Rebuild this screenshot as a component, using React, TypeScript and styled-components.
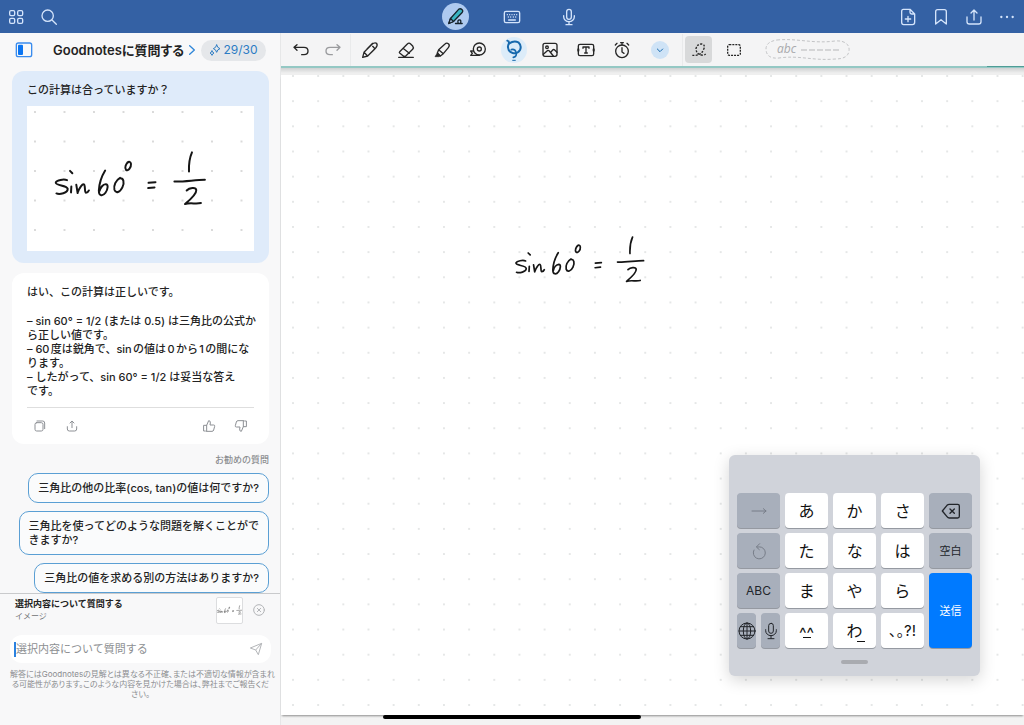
import React from "react";
import styled, { createGlobalStyle, css } from "styled-components";

const GlobalStyle = createGlobalStyle`
  *, *::before, *::after { box-sizing: border-box; }
  body {
    margin: 0;
    font-family: Inter, "Noto Sans CJK JP", sans-serif;
    font-size: 11px;
    color: #232323;
    background: #f3f3f3;
  }
  button, input { font: inherit; color: inherit; }
  p, h1, h2 { margin: 0; }
`;

/* ---------- shell ---------- */

const App = styled.div`
  position: relative;
  display: flex;
  flex-direction: column;
  height: 100vh;
  min-height: 600px;
  overflow: hidden;
`;

const TopBar = styled.header`
  display: grid;
  grid-template-columns: 1fr auto 1fr;
  align-items: center;
  flex: none;
  height: 33px;
  background: #3461a4;
  color: #d4e4fb;
`;

const TopGroup = styled.div<{ $end?: boolean }>`
  display: flex;
  align-items: center;
  justify-content: ${(p) => (p.$end ? "flex-end" : "flex-start")};
`;

const PlainButton = styled.button`
  display: flex;
  align-items: center;
  justify-content: center;
  flex: none;
  padding: 0;
  border: 0;
  background: none;
  cursor: pointer;
`;

const TopButton = styled(PlainButton)<{ $width: number }>`
  width: ${(p) => p.$width}px;
  height: 33px;
`;

const ModeDisc = styled.span`
  display: flex;
  border-radius: 50%;
  background: #aecaf0;
  color: #16232c;
`;

const Body = styled.div`
  display: flex;
  flex: 1;
  min-height: 0;
`;

const HomeIndicator = styled.div`
  position: absolute;
  left: 50%;
  bottom: 6px;
  width: 258px;
  height: 4px;
  margin-left: -129px;
  border-radius: 2px;
  background: #000;
`;

/* ---------- sidebar ---------- */

const Sidebar = styled.aside`
  display: flex;
  flex-direction: column;
  flex: none;
  width: 281px;
  background: #f8f8f9;
  border-right: 1px solid #e6e7e8;
`;

const SideHeader = styled.div`
  display: flex;
  align-items: center;
  flex: none;
  height: 34px;
  padding: 0 14px 0 15px;
`;

const SideTitle = styled.h1`
  flex: 1;
  padding-left: 20px;
  font-size: 13px;
  font-weight: 600;
  line-height: 18px;
  font-feature-settings: "palt";
  white-space: nowrap;
`;

const Quota = styled.span`
  display: flex;
  align-items: center;
  justify-content: center;
  gap: 2px;
  width: 65px;
  height: 21px;
  margin-left: 5px;
  border-radius: 11px;
  background: #e5e7ea;
  color: #2b7cc4;
  font-size: 12px;
  line-height: 20px;
`;

const Thread = styled.div`
  display: flex;
  flex-direction: column;
  flex: 1;
  gap: 10px;
  min-height: 0;
  padding: 4px 11px 0 12px;
  overflow: hidden;
`;

const Bubble = styled.section<{ $own?: boolean }>`
  flex: none;
  padding: ${(p) => (p.$own ? "12px 15px" : "12px 15px 0")};
  border-radius: 12px;
  background: ${(p) => (p.$own ? "#dfebfa" : "#fff")};
  font-weight: 500;
  line-height: 14px;
  text-autospace: normal;
  white-space: nowrap;
`;

const Snapshot = styled.div`
  position: relative;
  display: flex;
  align-items: center;
  height: 145px;
  margin-top: 9px;
  padding-left: 26px;
  background: #fff;
`;

const SnapshotSheet = styled.svg`
  position: absolute;
  inset: 0;
  width: 100%;
  height: 100%;
`;

const Paragraph = styled.p`
  margin-bottom: 15px;
`;

const Actions = styled.div`
  display: flex;
  align-items: center;
  gap: 14px;
  height: 37px;
  padding: 0 4px;
  border-top: 1px solid #dedede;
  color: #8d9095;
`;

const Answer = styled.div`
  margin-bottom: -6px;
`;

const Spacer = styled.span`
  flex: 1;
`;

const Suggestions = styled.div`
  display: flex;
  flex-direction: column;
  align-items: flex-end;
  flex: none;
  gap: 8px;
`;

const SuggestionsTitle = styled.h2`
  color: #8b8d90;
  font-size: 9px;
  font-weight: 500;
  line-height: 11px;
`;

const Suggestion = styled.button`
  flex: none;
  padding: 7px 9px;
  border: 1px solid #5a9fd4;
  border-radius: 10px;
  background: #fafbfc;
  font-weight: 500;
  line-height: 14px;
  text-align: left;
  white-space: nowrap;
  cursor: pointer;
`;

const Composer = styled.form`
  flex: none;
  padding: 2px 9px 26px 10px;
  border-top: 1px solid #c9cacc;
`;

const ContextRow = styled.div`
  display: flex;
  align-items: center;
  gap: 7px;
  height: 28px;
  padding: 0 3px 0 5px;
`;

const ContextText = styled.div`
  flex: 1;
  font-size: 9px;
  font-weight: 600;
  line-height: 13px;
`;

const ContextKind = styled.div`
  color: #707275;
  font-size: 8px;
  font-weight: 400;
`;

const Thumb = styled.div`
  display: flex;
  align-items: center;
  justify-content: flex-end;
  width: 27px;
  height: 27px;
  overflow: hidden;
  border: 1px solid #dcdddf;
  border-radius: 2px;
  background: #fff;
`;

const Field = styled.label`
  display: flex;
  align-items: center;
  height: 28px;
  margin-top: 11px;
  padding: 0 4px;
  border-radius: 12px;
  background: #fff;
`;

const Caret = styled.span`
  flex: none;
  width: 2px;
  height: 15px;
  background: #2b82e0;
`;

const Prompt = styled.input`
  flex: 1;
  min-width: 0;
  padding: 0;
  border: 0;
  outline: 0;
  background: none;
  font-size: 11px;
  &::placeholder { color: #8d8f92; opacity: 1; }
`;

const Disclaimer = styled.p`
  margin-top: 6px;
  color: #8b8d90;
  font-size: 8px;
  line-height: 10px;
  text-align: center;
  font-feature-settings: "palt";
  white-space: nowrap;
`;

/* ---------- editor ---------- */

const Editor = styled.main`
  position: relative;
  display: flex;
  flex-direction: column;
  flex: 1;
  min-width: 0;
`;

const Toolbar = styled.div`
  position: relative;
  display: flex;
  align-items: center;
  flex: none;
  height: 35px;
  padding: 0 4px;
  border-bottom: 2px solid #94c8c4;
  background: #f4f4f5;
  color: #262626;
`;

const TabMarker = styled.span`
  position: absolute;
  right: 0;
  bottom: -1px;
  width: 37px;
  height: 1px;
  background: #4f9c96;
`;

const Tool = styled(PlainButton)<{ $width?: number; $dim?: boolean }>`
  width: ${(p) => p.$width ?? 36}px;
  height: 32px;
  ${(p) => p.$dim && css`color: #9a9b9e;`}
`;

const ToolDisc = styled.span<{ $small?: boolean }>`
  display: flex;
  border-radius: 50%;
  background: ${(p) => (p.$small ? "#cfe3f6" : "#dcecf9")};
  color: #1769ad;
`;

const LassoMode = styled(PlainButton)<{ $on?: boolean }>`
  width: 27px;
  height: 27px;
  border-radius: 4px;
  ${(p) => p.$on && css`background: #d8d9da;`}
`;

const ToolDivider = styled.span<{ $wide?: boolean }>`
  flex: none;
  width: 1px;
  height: 32px;
  margin: ${(p) => (p.$wide ? "0 2px" : "0 1px")};
  background: #e9eaeb;
`;

const ModeRow = styled.div`
  display: flex;
  align-items: center;
  gap: 8px;
`;

const ToolHint = styled.span`
  display: flex;
  margin-left: 18px;
`;

const Desk = styled.div`
  display: flex;
  flex: 1;
  min-height: 0;
  padding: 7px 0 10px;
  background: linear-gradient(#cfd1d2, #efefef 5px, #f3f3f3);
`;

const Page = styled.div`
  position: relative;
  flex: 1;
  min-width: 0;
  background: #fff;
  box-shadow: 0 2px 2px -1px #8c8c8c;
`;

const InkSheet = styled.svg`
  display: block;
  width: 100%;
  height: 100%;
`;

const Ink = styled.div`
  position: absolute;
  left: 233px;
  top: 160px;
  display: flex;
`;

/* ---------- floating keyboard ---------- */

const Keyboard = styled.div`
  position: absolute;
  right: 44px;
  bottom: 49px;
  padding: 38px 8px 12px;
  border-radius: 6px;
  background: #d0d3da;
  box-shadow: 0 4px 16px rgba(0, 0, 0, 0.17);
`;

const Keys = styled.div`
  display: grid;
  grid-template-columns: repeat(5, 43px);
  grid-auto-rows: 35px;
  gap: 5px;
`;

const KeyPair = styled.div`
  display: grid;
  grid-template-columns: 19px 19px;
  gap: 5px;
`;

const keyTones = {
  light: css`background: #fff; color: #111;`,
  dark: css`background: #a8afbb; color: #22252a;`,
  off: css`background: #a8afbb; color: #777d88;`,
  send: css`background: #007aff; color: #fff; grid-row: span 2; grid-column: 5;`,
};

const Key = styled(PlainButton)<{ $tone?: keyof typeof keyTones; $size?: number }>`
  position: relative;
  flex-direction: column;
  border-radius: 4px;
  box-shadow: 0 1px 0 #9599a1;
  font-size: ${(p) => p.$size ?? 16}px;
  line-height: 18px;
  font-feature-settings: "palt";
  white-space: nowrap;
  ${(p) => keyTones[p.$tone ?? "light"]}
`;

const KeyMark = styled.span`
  position: absolute;
  right: 11px;
  bottom: 6px;
  width: 8px;
  height: 1px;
  background: #111;
`;

const Mouth = styled.span`
  width: 8px;
  height: 1px;
  margin-top: -5px;
  background: #111;
`;

const Grip = styled.div`
  width: 27px;
  height: 4px;
  margin: 12px auto 0;
  border-radius: 2px;
  background: #a9abb0;
`;

/* ---------- drawings ---------- */

type IconProps = { size?: number; weight?: number; children: React.ReactNode };

/* Every icon is drawn around its own centre, three units to the pixel. */
const Icon = ({ size = 18, weight = 4, children }: IconProps) => {
  const u = size * 3;
  return (
    <svg
      width={size}
      height={size}
      viewBox={`${-u / 2} ${-u / 2} ${u} ${u}`}
      fill="none"
      stroke="currentColor"
      strokeWidth={weight}
      strokeLinecap="round"
      strokeLinejoin="round"
      aria-hidden="true"
    >
      {children}
    </svg>
  );
};

const shareShape = <path d="M-21 0v14q0 7 7 7h28q7 0 7-7V0M0 9v-29M-9-12l9-9 9 9" />;

const micShape = (
  <>
    <rect x="-7" y="-23" width="14" height="30" rx="7" />
    <path d="M-16-4v3a16 15 0 0 0 32 0v-3M0 14v8M-9 23H9" />
  </>
);

const thumbShape = (
  <path d="M-7-2v17M-15-2h8l6-14q6 0 5 7l-1 6h11q4 0 3 4l-3 11q-1 4-5 4h-16q-3 0-3-1h-5z" />
);

const Equation = ({ width, height, weight = 6 }: { width: number; height: number; weight?: number }) => (
  <svg
    width={width}
    height={height}
    viewBox="160 152 462 172"
    fill="none"
    stroke="#151515"
    strokeWidth={weight}
    strokeLinecap="round"
    strokeLinejoin="round"
    role="img"
    aria-label="sin 60° = 1/2"
  >
    <path d="M201 243C191 239 170 243 167 250C165 260 201 258 203 269C204 282 178 287 169 283" />
    <path d="M214 262L213 280M210 215L217 222" />
    <path d="M229 257L233 282M233 281C238 266 248 253 252 256C257 259 253 280 258 281Q264 281 267 274" />
    <path d="M316 214C305 232 298 255 297 274C297 292 309 292 317 281C325 270 326 255 318 255C309 256 301 266 299 276" />
    <path d="M361 236C348 243 341 260 344 272C348 284 361 280 368 265C375 250 372 235 359 238" />
    <path d="M387 188C378 193 374 206 379 212C385 217 395 205 394 194C393 187 388 186 383 190" />
    <path d="M447 251L468 249M446 267L465 265" />
    <path d="M578 159C571 175 568 195 569 217M525 247C555 248 588 242 617 242" />
    <path d="M562 274C570 266 590 263 591 273C592 286 571 303 557 315C574 310 590 316 605 312" />
  </svg>
);

const Dots = ({ id, step, x, y, color }: { id: string; step: number; x: number; y: number; color: string }) => (
  <>
    <defs>
      <pattern id={id} x={x - step / 2} y={y - step / 2} width={step} height={step} patternUnits="userSpaceOnUse">
        <circle cx={step / 2} cy={step / 2} r="0.9" fill={color} />
      </pattern>
    </defs>
    <rect width="100%" height="100%" fill={`url(#${id})`} />
  </>
);

export default function NotesApp() {
  return (
    <App>
      <GlobalStyle />
      <TopBar>
        <TopGroup>
          <TopButton $width={32} aria-label="ライブラリ">
            <Icon>
              <rect x="-19" y="-19" width="15" height="15" rx="4" />
              <rect x="5" y="-19" width="15" height="15" rx="4" />
              <rect x="-19" y="4" width="15" height="15" rx="4" />
              <rect x="5" y="4" width="15" height="15" rx="4" />
            </Icon>
          </TopButton>
          <TopButton $width={34} aria-label="検索">
            <Icon>
              <circle cx="-4" cy="-4" r="17" />
              <path d="M9 9L22 22" />
            </Icon>
          </TopButton>
        </TopGroup>
        <TopGroup>
          <TopButton $width={57} aria-label="ペンモード">
            <ModeDisc>
              <Icon size={27}>
                <path d="M-15 6L10-22Q15-25 20-20Q24-16 20-12L-6 15L-20 21z" fill="#39b4c2" />
                <path d="M-15 6L-6 15L-20 21z" fill="#aecaf0" />
                <path d="M0 21H20M8 20q-3-10 4-10 6 0 3 11" />
              </Icon>
            </ModeDisc>
          </TopButton>
          <TopButton $width={57} aria-label="キーボードモード">
            <Icon>
              <rect x="-23" y="-17" width="46" height="34" rx="5" />
              <path d="M-10 9H10" />
              <path d="M-14-7h.1M-7-7h.1M0-7h.1M7-7h.1M14-7h.1M-11 0h.1M-4 0h.1M4 0h.1M11 0h.1" />
            </Icon>
          </TopButton>
          <TopButton $width={57} aria-label="録音">
            <Icon>{micShape}</Icon>
          </TopButton>
        </TopGroup>
        <TopGroup $end>
          <TopButton $width={33} aria-label="ページを追加">
            <Icon>
              <path d="M-14-23H6L20-9V16q0 7-7 7H-13q-6 0-6-7V-17q0-6 5-6zM6-23v9q0 5 5 5h9M-8 6H8M0-2v16" />
            </Icon>
          </TopButton>
          <TopButton $width={33} aria-label="ブックマーク">
            <Icon>
              <path d="M-16 21V-16q0-6 6-6H10q6 0 6 6V21L0 8z" />
            </Icon>
          </TopButton>
          <TopButton $width={33} aria-label="共有">
            <Icon>{shareShape}</Icon>
          </TopButton>
          <TopButton $width={34} aria-label="その他">
            <Icon weight={7}>
              <path d="M-17 0h.1M0 0h.1M17 0h.1" />
            </Icon>
          </TopButton>
        </TopGroup>
      </TopBar>

      <Body>
        <Sidebar>
          <SideHeader>
            <PlainButton aria-label="サイドバーを閉じる">
              <svg width="18" height="18" viewBox="-27 -27 54 54" fill="none" aria-hidden="true">
                <rect x="-23" y="-21" width="46" height="41" rx="6" stroke="#3a8cee" strokeWidth="4" />
                <rect x="-18" y="-16" width="15" height="31" rx="3" fill="#0a75f2" />
              </svg>
            </PlainButton>
            <SideTitle>Goodnotesに質問する</SideTitle>
            <PlainButton aria-label="会話の一覧">
              <svg width="8" height="14" viewBox="-12 -21 24 42" fill="none" stroke="#2f86d8" strokeWidth="4" strokeLinecap="round" strokeLinejoin="round" aria-hidden="true">
                <path d="M-7-13L7 0L-7 13" />
              </svg>
            </PlainButton>
            <Quota>
              <Icon size={12} weight={3}>
                <path d="M5-15Q7-6 15-4Q7-2 5 7Q3-2-5-4Q3-6 5-15zM-9 3Q-8 8-3 9Q-8 11-9 16Q-10 11-15 9Q-10 8-9 3z" />
              </Icon>
              29/30
            </Quota>
          </SideHeader>

          <Thread>
            <Bubble $own>
              <p>この計算は合っていますか？</p>
              <Snapshot>
                <SnapshotSheet aria-hidden="true">
                  <Dots id="snapshot-dots" step={29.5} x={8} y={6} color="#c9c9c9" />
                </SnapshotSheet>
                <Equation width={154} height={57} />
              </Snapshot>
            </Bubble>

            <Bubble>
              <Answer>
                <Paragraph>はい、この計算は正しいです。</Paragraph>
                <Paragraph>
                  – sin 60° = 1/2 (または 0.5) は三角比の公式か
                  <br />
                  ら正しい値です。
                  <br />
                  – 60度は鋭角で、sinの値は0から1の間にな
                  <br />
                  ります。
                  <br />
                  – したがって、sin 60° = 1/2 は妥当な答え
                  <br />
                  です。
                </Paragraph>
              </Answer>
              <Actions>
                <PlainButton aria-label="コピー">
                  <Icon weight={3}>
                    <rect x="-15" y="-10" width="24" height="25" rx="5" />
                    <path d="M-9-15H8q6 0 6 6V8" />
                  </Icon>
                </PlainButton>
                <PlainButton aria-label="共有">
                  <Icon weight={3}>
                    <path d="M-14 2v7q0 6 6 6H8q6 0 6-6V2M0 5v-19M-6-9l6-6 6 6" />
                  </Icon>
                </PlainButton>
                <Spacer />
                <PlainButton aria-label="良い回答">
                  <Icon weight={3}>{thumbShape}</Icon>
                </PlainButton>
                <PlainButton aria-label="悪い回答">
                  <Icon weight={3}>
                    <g transform="rotate(180)">{thumbShape}</g>
                  </Icon>
                </PlainButton>
              </Actions>
            </Bubble>

            <Suggestions>
              <SuggestionsTitle>お勧めの質問</SuggestionsTitle>
              <Suggestion>三角比の他の比率(cos, tan)の値は何ですか?</Suggestion>
              <Suggestion>
                三角比を使ってどのような問題を解くことがで
                <br />
                きますか?
              </Suggestion>
              <Suggestion>三角比の値を求める別の方法はありますか?</Suggestion>
            </Suggestions>
          </Thread>

          <Composer onSubmit={(e) => e.preventDefault()}>
            <ContextRow>
              <ContextText>
                選択内容について質問する
                <ContextKind>イメージ</ContextKind>
              </ContextText>
              <Thumb>
                <Equation width={32} height={12} weight={7} />
              </Thumb>
              <PlainButton type="button" aria-label="選択を解除">
                <svg width="18" height="18" viewBox="-27 -27 54 54" fill="none" stroke="#b3b5b8" strokeWidth="3" strokeLinecap="round" aria-hidden="true">
                  <circle r="16" />
                  <path d="M-5-5L5 5M5-5L-5 5" />
                </svg>
              </PlainButton>
            </ContextRow>
            <Field>
              <Caret />
              <Prompt type="text" placeholder="選択内容について質問する" aria-label="質問" />
              <PlainButton type="submit" aria-label="送信">
                <svg width="22" height="18" viewBox="-33 -27 66 54" fill="none" stroke="#b3b5b8" strokeWidth="3" strokeLinejoin="round" aria-hidden="true">
                  <path d="M17-17L7 17L-1 3L-17-3zM17-17L-1 3" />
                </svg>
              </PlainButton>
            </Field>
            <Disclaimer>
              解答にはGoodnotesの見解とは異なる不正確、または不適切な情報が含まれ
              <br />
              る可能性があります。このような内容を見かけた場合は、弊社までご報告くだ
              <br />
              さい。
            </Disclaimer>
          </Composer>
        </Sidebar>

        <Editor>
          <Toolbar>
            <Tool $width={32} aria-label="取り消す">
              <Icon>
                <path d="M-12-16L-21-8L-12 1M-20-8H9q12 0 12 11t-12 11H2" />
              </Icon>
            </Tool>
            <Tool $width={32} $dim aria-label="やり直す">
              <Icon>
                <path d="M12-16L21-8L12 1M20-8H-9q-12 0-12 11t12 11H-2" />
              </Icon>
            </Tool>
            <ToolDivider />
            <Tool aria-label="ペン">
              <Icon>
                <path d="M-22 22L-18 7L6-17Q14-24 20-20Q24-14 17-6L-7 18zM-18 7L-7 18M-9-3L8-20M8-11L15-4L3 8" />
              </Icon>
            </Tool>
            <Tool aria-label="消しゴム">
              <Icon>
                <path d="M-19 5L4-18Q9-23 14-18L20-12Q24-7 20-2L0 17Q-5 21-9 17L-19 9Q-21 7-19 5zM-9-5L10 10M-22 22H22" />
              </Icon>
            </Tool>
            <Tool aria-label="蛍光ペン">
              <Icon>
                <path d="M-10-1L9-18Q14-23 20-18Q24-13 19-7L4 11zM-10-1L-14 9L-5 18L4 11" />
                <path d="M-14 9L-21 20H-10L-5 18z" fill="currentColor" strokeWidth="2" />
              </Icon>
            </Tool>
            <Tool aria-label="テープ">
              <Icon>
                <circle cx="4" cy="-3" r="18" />
                <circle cx="4" cy="-3" r="6" />
                <path d="M4 16H-22L-17 10L-22 3H-14" />
              </Icon>
            </Tool>
            <Tool aria-label="なげなわ">
              <ToolDisc>
                <Icon size={26} weight={6}>
                  <path d="M-14-20Q0-29 13-23Q24-13 18 0Q10 13-4 9Q-17 5-18-8Q-19-15-14-20zM-20-28Q-12-25-17-16" />
                  <path d="M-8-1Q2-4 6 6Q10 20-2 22" strokeWidth="5" />
                  <path d="M-4 31H4" strokeWidth="3" />
                </Icon>
              </ToolDisc>
            </Tool>
            <Tool aria-label="画像">
              <Icon>
                <rect x="-21" y="-20" width="42" height="39" rx="6" />
                <circle cx="-9" cy="-8" r="4" />
                <path d="M-20 13L-8 2Q-5 0-2 3L10 18M2 7L8 0Q11-3 14 0L21 7" />
              </Icon>
            </Tool>
            <Tool aria-label="テキスト">
              <Icon>
                <rect x="-23" y="-17" width="46" height="34" rx="5" />
                <path d="M-9-5V-9H9v4M0-9V9M-4 9H4" />
                <path d="M-23-2v4M23-2v4" strokeWidth="6" />
              </Icon>
            </Tool>
            <Tool aria-label="タイマー">
              <Icon>
                <circle cy="4" r="19" />
                <path d="M0-7V6L6 10M-4-22H4M0-22v7M-20-15l5-5M20-15l-5-5" />
              </Icon>
            </Tool>
            <Tool $width={40} aria-label="その他のツール">
              <ToolDisc $small>
                <Icon weight={3}>
                  <path d="M-8-3L0 5L8-3" />
                </Icon>
              </ToolDisc>
            </Tool>
            <ToolDivider $wide />
            <ModeRow>
              <LassoMode $on aria-label="フリーハンド選択">
                <Icon>
                  <path
                    d="M-20 16H-10Q8 14 14-2Q20-16 8-18Q-6-18-9-4Q-9 12 8 15Q16 16 20 12"
                    strokeDasharray="6 4"
                    strokeLinecap="butt"
                  />
                </Icon>
              </LassoMode>
              <LassoMode aria-label="長方形選択">
                <Icon>
                  <rect x="-19" y="-16" width="38" height="32" rx="5" strokeDasharray="6 3" strokeLinecap="butt" />
                </Icon>
              </LassoMode>
            </ModeRow>
            <ToolHint>
              <svg width="86" height="24" viewBox="0 0 86 24" fill="none" role="img" aria-label="abc">
                <path
                  d="M12 2C32 0 48 6 70 3C80 2 85 7 84 13C83 19 78 21 70 21C48 23 34 17 14 20C5 21 1 17 1 11C1 6 5 3 12 2z"
                  stroke="#c3c4c6"
                  strokeDasharray="3 2"
                />
                <text x="12" y="15" fill="#a9aaad" fontFamily="Open Sans, sans-serif" fontSize="12" fontStyle="italic">abc</text>
                <path d="M36 12H74" stroke="#b5b6b8" strokeDasharray="6 2" />
              </svg>
            </ToolHint>
            <TabMarker />
          </Toolbar>

          <Desk>
            <Page>
              <InkSheet aria-hidden="true">
                <Dots id="page-dots" step={25.16} x={12} y={1} color="#dadcdc" />
              </InkSheet>
              <Ink>
                <Equation width={131} height={49} />
              </Ink>
            </Page>
          </Desk>

          <Keyboard>
            <Keys>
              <Key $tone="off" aria-label="次へ">
                <Icon weight={3}>
                  <path d="M-21 0H21M13-7L21 0L13 7" />
                </Icon>
              </Key>
              <Key>あ</Key>
              <Key>か</Key>
              <Key>さ</Key>
              <Key $tone="dark" aria-label="削除">
                <Icon size={20}>
                  <path d="M-26 0L-12-17Q-9-20-5-20H20q5 0 5 5V16q0 5-5 5H-5Q-9 21-12 17zM-3-6L10 7M10-6L-3 7" />
                </Icon>
              </Key>

              <Key $tone="off" aria-label="逆順">
                <Icon weight={3}>
                  <path d="M-15-3A18 18 0 1 0 8-11Q4-13-6-12M2-22L-8-12L1-4" />
                </Icon>
              </Key>
              <Key>た</Key>
              <Key>な</Key>
              <Key>は</Key>
              <Key $tone="dark" $size={11}>空白</Key>

              <Key $tone="dark" $size={12}>ABC</Key>
              <Key>ま</Key>
              <Key>や</Key>
              <Key>ら</Key>
              <Key $tone="send" $size={11}>送信</Key>

              <KeyPair>
                <Key $tone="dark" aria-label="言語">
                  <Icon weight={3}>
                    <circle r="24" />
                    <ellipse rx="11" ry="24" />
                    <path d="M0-24V24M-24 0H24M-20-13H20M-20 13H20" />
                  </Icon>
                </Key>
                <Key $tone="dark" aria-label="音声入力">
                  <Icon weight={3}>{micShape}</Icon>
                </Key>
              </KeyPair>
              <Key aria-label="顔文字">
                ^^
                <Mouth />
              </Key>
              <Key>
                わ
                <KeyMark />
              </Key>
              <Key $size={15}>、。?!</Key>
            </Keys>
            <Grip />
          </Keyboard>
        </Editor>
      </Body>
      <HomeIndicator />
    </App>
  );
}
